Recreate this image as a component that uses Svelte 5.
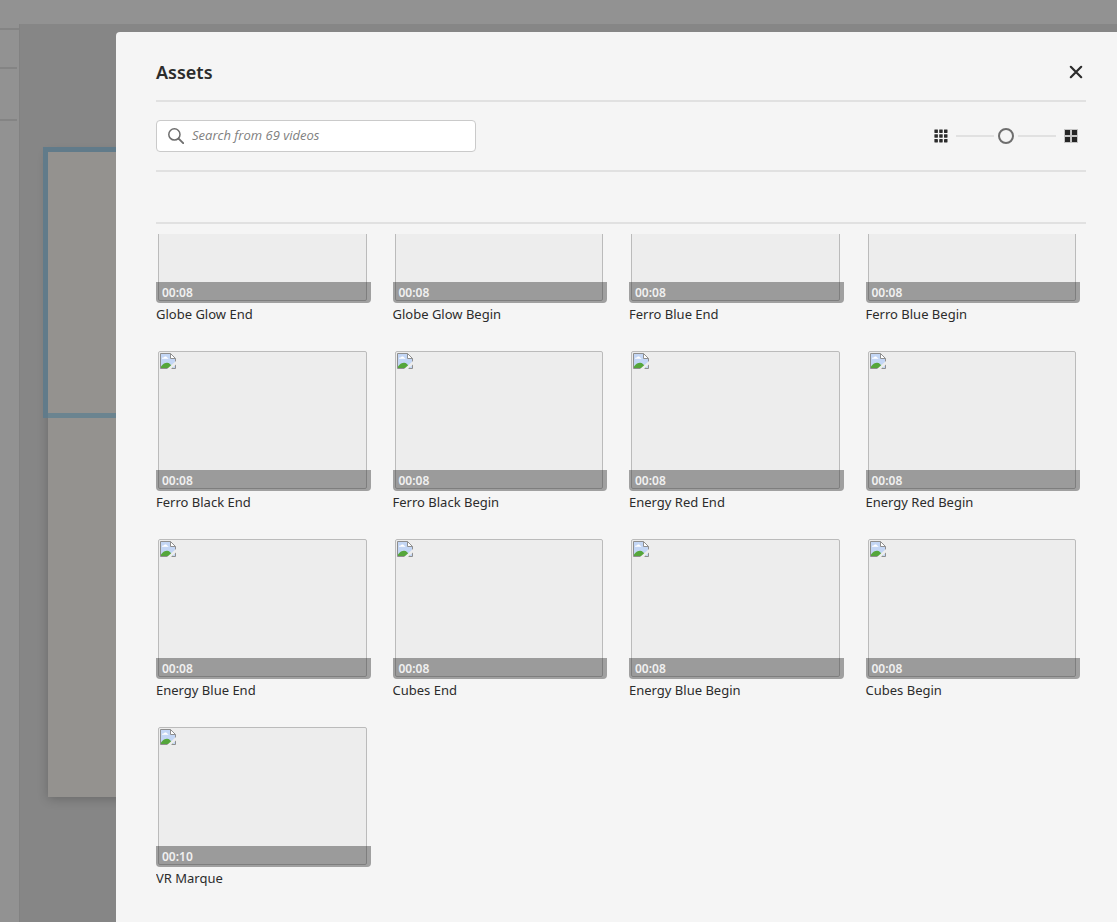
<script lang="ts">
	interface Video {
		name: string;
		duration: string;
	}

	const videos: Video[] = [
		{ name: 'Globe Glow End', duration: '00:08' },
		{ name: 'Globe Glow Begin', duration: '00:08' },
		{ name: 'Ferro Blue End', duration: '00:08' },
		{ name: 'Ferro Blue Begin', duration: '00:08' },
		{ name: 'Ferro Black End', duration: '00:08' },
		{ name: 'Ferro Black Begin', duration: '00:08' },
		{ name: 'Energy Red End', duration: '00:08' },
		{ name: 'Energy Red Begin', duration: '00:08' },
		{ name: 'Energy Blue End', duration: '00:08' },
		{ name: 'Cubes End', duration: '00:08' },
		{ name: 'Energy Blue Begin', duration: '00:08' },
		{ name: 'Cubes Begin', duration: '00:08' },
		{ name: 'VR Marque', duration: '00:10' }
	];

	let query = $state('');
	let zoom = $state(50);

	let shown = $derived(videos.filter((v) => v.name.toLowerCase().includes(query.toLowerCase())));
</script>

<div class="workspace">
	<div class="topbar"></div>
	<div class="body">
		<div class="rail">
			<div class="rail-item first"></div>
			<div class="rail-item"></div>
			<div class="rail-item tall"></div>
		</div>
		<div class="canvas">
			<div class="page">
				<div class="selection"></div>
			</div>
		</div>
	</div>
</div>

<div class="dialog" role="dialog" aria-labelledby="dialog-title">
	<header class="header">
		<h1 id="dialog-title">Assets</h1>
		<button class="close" aria-label="Close">
			<svg width="14" height="14" viewBox="0 0 14 14">
				<path d="M1.8 1.8 12.2 12.2M12.2 1.8 1.8 12.2" stroke="#2c2c2c" stroke-width="2.2" stroke-linecap="round" />
			</svg>
		</button>
	</header>

	<div class="toolbar">
		<div class="search">
			<svg width="16" height="16" viewBox="0 0 16 16" fill="none" stroke="#6e6e6e">
				<circle cx="6.4" cy="6.4" r="5.6" stroke-width="1.5" />
				<path d="M10.6 10.6 15.2 15.2" stroke-width="1.9" stroke-linecap="round" />
			</svg>
			<input type="text" aria-label="Search videos" placeholder="Search from 69 videos" bind:value={query} />
		</div>
		<div class="zoom">
			<svg width="14" height="14" viewBox="0 0 14 14" fill="#2c2c2c">
				{#each [0.4, 5.2, 10] as y}
					{#each [0.4, 5.2, 10] as x}
						<rect {x} {y} width="3.5" height="3.5" rx="0.4" />
					{/each}
				{/each}
			</svg>
			<input type="range" aria-label="Thumbnail size" min="0" max="100" bind:value={zoom} style="--pos: {zoom / 100}" />
			<svg width="14" height="14" viewBox="0 0 14 14">
				<rect width="14" height="14" fill="#c4c4c4" />
				<path d="M1 1h5v5h-5zM8 1h5v5h-5zM1 8h5v5h-5zM8 8h5v5h-5z" fill="#252525" />
			</svg>
		</div>
	</div>

	<div class="filters"></div>

	<div class="results">
		<div class="grid">
			{#each shown as video}
				<figure class="card">
					<div class="thumb">
						<div class="preview">
							<svg width="16" height="16" viewBox="0 0 16 16">
								<path d="M.5.5h10l5 5v10H.5z" fill="#c3d6f5" />
								<path d="M2 5.8c0-1.3 1.2-1.7 1.8-1.2.5-1.6 3-1.5 3.3.1 1-.1 1.3.5 1.3 1.1z" fill="#fff" />
								<path d="M1 15v-1.600C3 10.800 5 9.800 7 9.800c2.500 0 4 2 6 5.200z" fill="#55a63b" />
								<path d="M10.5.5v5h5z" fill="#fff" />
								<path d="M.5 15.5V.5h10l5 5v10zM10.5.5v5h5" fill="none" stroke="#8f8f8f" />
								<path d="M7 16 16 8v3.400L11 16z" fill="#ededed" />
							</svg>
						</div>
						<span class="duration">{video.duration}</span>
					</div>
					<figcaption>{video.name}</figcaption>
				</figure>
			{/each}
		</div>
	</div>
</div>

<style>
	:global(body) {
		margin: 0;
		background: #868686;
		font-family: 'Noto Sans', 'Open Sans', sans-serif;
	}

	.workspace {
		display: flex;
		flex-direction: column;
		height: 100vh;
		overflow: hidden;
	}

	.topbar {
		flex: 0 0 24px;
		background: #929292;
	}

	.body {
		display: flex;
		flex: 1;
	}

	.rail {
		box-sizing: border-box;
		width: 20px;
		border-right: 1px solid #828282;
		background: #929292;
	}

	.rail-item {
		box-sizing: border-box;
		height: 39px;
		margin-right: 2px;
		border-bottom: 2px solid #848484;
	}

	.rail-item.first {
		height: 6px;
		margin-right: 0;
	}

	.rail-item.tall {
		height: 52px;
	}

	.canvas {
		flex: 1;
		padding: 123px 0 0 23px;
	}

	.page {
		height: 645px;
		margin: 5px 0 0 5px;
		background: #94928f;
		box-shadow: 0 2px 10px rgba(0, 0, 0, 0.22);
	}

	.selection {
		box-sizing: border-box;
		height: 266px;
		border-bottom: 5px solid #6b8490;
		box-shadow:
			-5px 0 #617b8a,
			0 -5px #617b8a,
			-5px -5px #617b8a;
	}

	.dialog {
		position: absolute;
		top: 32px;
		right: 0;
		left: 116px;
		box-sizing: border-box;
		min-height: calc(100vh - 32px);
		padding: 0 31px 0 40px;
		border-top-left-radius: 4px;
		background: #f5f5f5;
		color: #2c2c2c;
	}

	.header {
		display: flex;
		align-items: center;
		justify-content: space-between;
		box-sizing: border-box;
		height: 70px;
		padding-top: 12px;
		border-bottom: 2px solid #e1e1e1;
	}

	h1 {
		margin: 0;
		font-size: 18px;
		font-weight: 600;
		line-height: 24px;
	}

	.close {
		display: flex;
		padding: 3px;
		border: 0;
		background: none;
		cursor: pointer;
	}

	.toolbar {
		display: flex;
		align-items: center;
		justify-content: space-between;
		box-sizing: border-box;
		height: 70px;
		border-bottom: 2px solid #e1e1e1;
	}

	.search {
		display: flex;
		align-items: center;
		gap: 8px;
		box-sizing: border-box;
		width: 320px;
		height: 32px;
		padding: 0 11px;
		border: 1px solid #cacaca;
		border-radius: 4px;
		background: #fff;
	}

	.search input {
		flex: 1;
		min-width: 0;
		padding: 0 0 2px;
		border: 0;
		outline: 0;
		background: none;
		color: #2c2c2c;
		font: 13px/20px 'Open Sans', 'Noto Sans', sans-serif;
	}

	.search input::placeholder {
		color: #808080;
		font-style: italic;
	}

	.zoom {
		display: flex;
		align-items: center;
		gap: 8px;
		padding-right: 8px;
	}

	.zoom input {
		--line: #e1e1e1;
		--gap-start: calc(var(--pos) * (100% - 24px));
		width: 100px;
		height: 24px;
		margin: 0;
		appearance: none;
		background: linear-gradient(
				to right,
				var(--line) var(--gap-start),
				transparent var(--gap-start) calc(var(--gap-start) + 24px),
				var(--line) calc(var(--gap-start) + 24px)
			)
			center / 100% 2px no-repeat;
	}

	.zoom input::-webkit-slider-thumb {
		box-sizing: border-box;
		width: 16px;
		height: 16px;
		border: 2px solid #6e6e6e;
		border-radius: 50%;
		appearance: none;
		background: #f5f5f5;
	}

	.filters {
		height: 50px;
		border-bottom: 2px solid #e1e1e1;
	}

	.results {
		margin-top: 10px;
		overflow: hidden;
	}

	/* list sits scrolled into its first row */
	.grid {
		display: grid;
		grid-template-columns: repeat(4, 1fr);
		gap: 24px 22px;
		margin: -71px 6px 0 0;
	}

	.card {
		margin: 0;
	}

	.thumb {
		position: relative;
		height: 140px;
		border-radius: 4px;
		overflow: hidden;
	}

	.preview {
		box-sizing: border-box;
		height: 138px;
		margin: 0 4px 2px 2px;
		padding: 1px;
		border: 1px solid #bbb;
		border-radius: 2px;
		background: #ededed;
	}

	.preview svg {
		display: block;
	}

	.duration {
		position: absolute;
		right: 0;
		bottom: 0;
		left: 0;
		padding-left: 6px;
		background: rgba(44, 44, 44, 0.42);
		color: #f0f0f0;
		font-size: 12px;
		font-weight: 600;
		line-height: 21px;
	}

	figcaption {
		height: 24px;
		font-size: 13px;
		line-height: 22px;
		white-space: nowrap;
	}
</style>
